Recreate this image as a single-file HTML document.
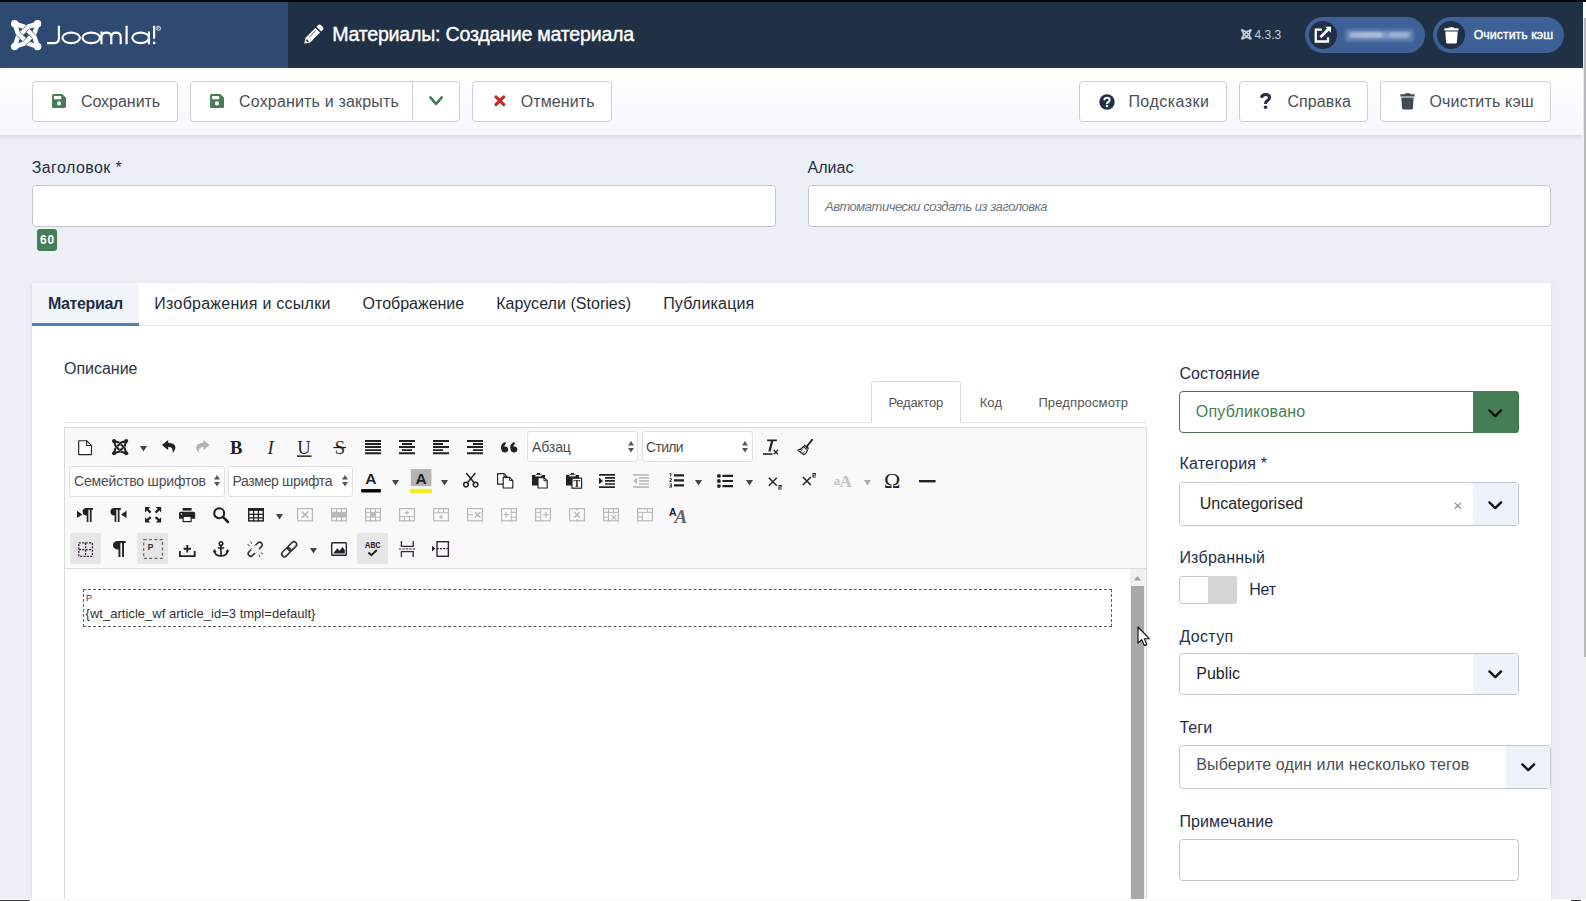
<!DOCTYPE html>
<html lang="ru"><head><meta charset="utf-8"><title>Материалы: Создание материала</title>
<style>
*{box-sizing:border-box;margin:0;padding:0}
html,body{width:1586px;height:901px;overflow:hidden;background:#ecf0f6;font-family:"Liberation Sans",sans-serif;}
#page{position:relative;width:1586px;height:901px;overflow:hidden;background:#ecf0f6}
.a{position:absolute}
.t{position:absolute;white-space:pre;font-family:"Liberation Sans",sans-serif}
.i{position:absolute;overflow:visible}
.hdr{left:0;top:0;width:1583px;height:68px;background:#1f3047}
.logo{left:0;top:0;width:288px;height:68px;background:#2f4a70}
.topbar{left:0;top:0;width:1586px;height:2px;background:#05070b}
.sub{left:0;top:68px;width:1583px;height:67px;background:linear-gradient(to bottom,#fff 0%,#f6f8fc 100%);box-shadow:0 2px 4px rgba(175,188,212,.38)}
.btn{background:#fff;border:1px solid #c9d0da;border-radius:4px;top:81px;height:41px}
.pill{top:17px;height:36px;border-radius:18px;background:#3d6097}
.circ{top:21px;width:28px;height:28px;border-radius:14px;background:#1f3047}
.inp{background:#fff;border:1px solid #c2c8d2;border-radius:4px}
.card{left:32px;top:283px;width:1519px;height:640px;background:#fff;box-shadow:0 1px 3px rgba(160,175,200,.4)}
.sel{background:#fff;border:1px solid #e1e1e1;border-radius:3px}
.hl{background:#e6e6e6;border-radius:2px;width:31px;height:31px}

</style></head>
<body>
<div id="page">
<div class="a hdr"></div>
<div class="a logo"></div>
<div class="a topbar"></div>
<!-- scrollbar strip -->
<div class="a" style="left:1583px;top:2px;width:3px;height:16px;background:#fdfdfd"></div>
<div class="a" style="left:1583px;top:18px;width:3px;height:883px;background:#f0f0f0"></div>
<div class="a" style="left:1584.3px;top:18px;width:1.7px;height:639px;background:#b9b9b9"></div>
<!-- header pills -->
<div class="a pill" style="left:1305px;width:120px"></div>
<div class="a circ" style="left:1309px"></div>
<div class="a" style="left:1345px;top:28.5px;width:69px;height:13px;border-radius:3px;background:rgba(140,168,210,.42);filter:blur(1.6px)"></div>
<div class="a" style="left:1347px;top:31.5px;width:65px;height:6px;border-radius:3px;background:linear-gradient(to right,rgba(220,230,245,0) 0%,rgba(220,230,245,.55) 8%,rgba(225,233,247,.6) 50%,rgba(220,230,245,.2) 60%,rgba(220,230,245,.5) 70%,rgba(220,230,245,.5) 92%,rgba(220,230,245,0) 100%);filter:blur(1.3px)"></div>
<div class="a pill" style="left:1433px;width:131px"></div>
<div class="a circ" style="left:1437px"></div>
<!-- subhead -->
<div class="a sub"></div>
<div class="a btn" style="left:32px;width:146px"></div>
<div class="a btn" style="left:190px;width:270px"></div>
<div class="a" style="left:411.5px;top:82px;width:1px;height:39px;background:#c9d0da"></div>
<div class="a btn" style="left:472px;width:140px"></div>
<div class="a btn" style="left:1079px;width:148px"></div>
<div class="a btn" style="left:1239px;width:129px"></div>
<div class="a btn" style="left:1380px;width:171px"></div>
<!-- title/alias -->
<div class="a inp" style="left:32px;top:185px;width:744px;height:42px"></div>
<div class="a inp" style="left:808px;top:185px;width:743px;height:42px"></div>
<div class="a" style="left:37px;top:229px;width:20px;height:21.5px;background:#457d54;border-radius:3px"></div>
<!-- card -->
<div class="a card"></div>
<div class="a" style="left:32px;top:283px;width:107px;height:43px;background:#f1f5fa"></div>
<div class="a" style="left:32px;top:325px;width:1519px;height:1px;background:#dfe3e8"></div>
<div class="a" style="left:32px;top:322.5px;width:107px;height:3.5px;background:#517eb5"></div>
<!-- editor tabs -->
<div class="a" style="left:64px;top:422px;width:1083px;height:1px;background:#e1e1e1"></div>
<div class="a" style="left:871px;top:381px;width:90px;height:42px;background:#fff;border:1px solid #ddd;border-bottom:1px solid #fff;border-radius:3px 3px 0 0"></div>
<!-- editor -->
<div class="a" style="left:64px;top:427px;width:1083px;height:480px;background:#fff;border:1px solid #dcdcdc"></div>
<div class="a" style="left:65px;top:428px;width:1081px;height:141px;background:#f9f9f9;border-bottom:1px solid #dedede"></div>
<div class="a sel" style="left:527px;top:431px;width:111px;height:31px"></div>
<div class="a sel" style="left:641.5px;top:431px;width:111px;height:31px"></div>
<div class="a sel" style="left:69px;top:465.5px;width:155.5px;height:31px"></div>
<div class="a sel" style="left:227.5px;top:465.5px;width:125px;height:31px"></div>
<div class="a hl" style="left:69.5px;top:533.3px"></div>
<div class="a hl" style="left:137.3px;top:533.3px"></div>
<div class="a hl" style="left:357.3px;top:533.3px"></div>
<!-- content -->
<div class="a" style="left:83px;top:589px;width:1028.5px;height:38px;border:1px dashed #5a5a5a"></div>
<!-- editor scrollbar -->
<div class="a" style="left:1130px;top:569px;width:15.5px;height:332px;background:#f1f1f1"></div>
<div class="a" style="left:1130.8px;top:586px;width:13.2px;height:315px;background:#a9a9a9"></div>
<svg class="i" style="left:1134px;top:576px" width="7" height="4.4" viewBox="0 0 7 4.4"><path d="M0 4.4H7L3.5 0Z" fill="#a3a3a3"/></svg>
<!-- sidebar -->
<div class="a" style="left:1179px;top:391px;width:340px;height:41.5px;background:#fff;border:1px solid #4b7459;border-radius:4px"></div>
<div class="a" style="left:1473px;top:391px;width:46px;height:41.5px;background:#457d54;border-radius:0 4px 4px 0"></div>
<div class="a inp" style="left:1179px;top:482px;width:340px;height:43.5px"></div>
<div class="a" style="left:1473px;top:483px;width:45px;height:41.5px;background:#eef2fa;border-radius:0 3px 3px 0"></div>
<div class="a" style="left:1179px;top:576px;width:58px;height:27.5px;background:#fff;border:1px solid #c8c8c8;border-radius:3px"></div>
<div class="a" style="left:1208px;top:576px;width:29px;height:27.5px;background:#d5d5d5;border-radius:0 3px 3px 0"></div>
<div class="a inp" style="left:1179px;top:653px;width:340px;height:41.5px"></div>
<div class="a" style="left:1473px;top:654px;width:45px;height:39.5px;background:#eef2fa;border-radius:0 3px 3px 0"></div>
<div class="a inp" style="left:1179px;top:745px;width:371.5px;height:43.5px"></div>
<div class="a" style="left:1506px;top:746px;width:43.5px;height:41.5px;background:#eef2fa;border-radius:0 3px 3px 0"></div>
<div class="a inp" style="left:1179px;top:839px;width:340px;height:41.5px"></div>
<!-- mouse cursor -->
<svg class="i" style="left:1137.4px;top:626.4px" width="14" height="21" viewBox="0 0 14 21"><path d="M1 1V17.2L4.7 13.6L7.4 19.6L9.9 18.5L7.3 12.7H12.3Z" fill="#fff" stroke="#111" stroke-width="1.15" stroke-linejoin="round"/></svg>
<!-- bottom artefacts -->
<div class="a" style="left:0;top:899.4px;width:1586px;height:1.6px;background:#fbfbfb"></div>
<div class="a" style="left:0;top:900px;width:30px;height:1px;background:#3a3d42"></div>
<div class="a" style="left:1571px;top:900px;width:10px;height:1px;background:#3a3d42"></div>

<!-- text layer -->
<span class="t" style="left:332.20px;top:24.91px;font-size:19.6px;line-height:19.6px;letter-spacing:-0.224px;color:#fff;-webkit-text-stroke:0.4px #fff;">Материалы: Создание материала</span>
<span class="t" style="left:1254.40px;top:28.94px;font-size:12px;line-height:12px;letter-spacing:0.024px;color:#c5ccd8;">4.3.3</span>
<span class="t" style="left:1473.70px;top:28.79px;font-size:12.3px;line-height:12.3px;letter-spacing:0.072px;color:#fff;-webkit-text-stroke:0.4px #fff;">Очистить кэш</span>
<span class="t" style="left:80.90px;top:93.76px;font-size:16px;line-height:16px;letter-spacing:-0.027px;color:#495057;">Сохранить</span>
<span class="t" style="left:239.00px;top:93.76px;font-size:16px;line-height:16px;letter-spacing:0.176px;color:#495057;">Сохранить и закрыть</span>
<span class="t" style="left:520.80px;top:93.76px;font-size:16px;line-height:16px;letter-spacing:0.099px;color:#495057;">Отменить</span>
<span class="t" style="left:1128.40px;top:93.76px;font-size:16px;line-height:16px;letter-spacing:0.471px;color:#495057;">Подсказки</span>
<span class="t" style="left:1287.40px;top:93.76px;font-size:16px;line-height:16px;letter-spacing:0.106px;color:#495057;">Справка</span>
<span class="t" style="left:1429.40px;top:93.76px;font-size:16px;line-height:16px;letter-spacing:0.174px;color:#495057;">Очистить кэш</span>
<span class="t" style="left:31.70px;top:160.46px;font-size:16px;line-height:16px;letter-spacing:0.419px;color:#1f2f47;">Заголовок *</span>
<span class="t" style="left:807.40px;top:160.46px;font-size:16px;line-height:16px;letter-spacing:0.089px;color:#1f2f47;">Алиас</span>
<span class="t" style="left:825.00px;top:199.50px;font-size:13px;line-height:13px;letter-spacing:-0.464px;color:#6c757d;font-style:italic;">Автоматически создать из заголовка</span>
<span class="t" style="left:40.00px;top:233.74px;font-size:12px;line-height:12px;letter-spacing:0.841px;color:#fff;font-weight:700;">60</span>
<span class="t" style="left:47.90px;top:295.56px;font-size:16px;line-height:16px;letter-spacing:-0.361px;color:#1f2f47;font-weight:700;">Материал</span>
<span class="t" style="left:154.30px;top:295.56px;font-size:16px;line-height:16px;letter-spacing:0.260px;color:#252b33;">Изображения и ссылки</span>
<span class="t" style="left:362.60px;top:295.56px;font-size:16px;line-height:16px;letter-spacing:-0.013px;color:#252b33;">Отображение</span>
<span class="t" style="left:496.20px;top:295.56px;font-size:16px;line-height:16px;letter-spacing:0.041px;color:#252b33;">Карусели (Stories)</span>
<span class="t" style="left:663.20px;top:295.56px;font-size:16px;line-height:16px;letter-spacing:0.186px;color:#252b33;">Публикация</span>
<span class="t" style="left:64.00px;top:360.56px;font-size:16px;line-height:16px;letter-spacing:-0.018px;color:#2b3644;">Описание</span>
<span class="t" style="left:888.40px;top:396.40px;font-size:13px;line-height:13px;letter-spacing:-0.167px;color:#555;">Редактор</span>
<span class="t" style="left:979.70px;top:396.40px;font-size:13px;line-height:13px;letter-spacing:0.095px;color:#555;">Код</span>
<span class="t" style="left:1038.40px;top:396.40px;font-size:13px;line-height:13px;letter-spacing:0.139px;color:#555;">Предпросмотр</span>
<span class="t" style="left:532.10px;top:440.35px;font-size:14px;line-height:14px;letter-spacing:-0.145px;color:#4d4d4d;">Абзац</span>
<span class="t" style="left:646.10px;top:440.35px;font-size:14px;line-height:14px;letter-spacing:-0.736px;color:#4d4d4d;">Стили</span>
<span class="t" style="left:74.00px;top:474.35px;font-size:14px;line-height:14px;letter-spacing:-0.189px;color:#4d4d4d;">Семейство шрифтов</span>
<span class="t" style="left:232.40px;top:474.35px;font-size:14px;line-height:14px;letter-spacing:-0.326px;color:#4d4d4d;">Размер шрифта</span>
<span class="t" style="left:86.00px;top:594.18px;font-size:9px;line-height:9px;letter-spacing:0.000px;color:#444;">P</span>
<span class="t" style="left:85.60px;top:606.60px;font-size:13px;line-height:13px;letter-spacing:0.018px;color:#333;">{wt_article_wf article_id=3 tmpl=default}</span>
<span class="t" style="left:1179.40px;top:365.56px;font-size:16px;line-height:16px;letter-spacing:0.045px;color:#1f2f47;">Состояние</span>
<span class="t" style="left:1195.80px;top:403.86px;font-size:16px;line-height:16px;letter-spacing:0.214px;color:#457d54;">Опубликовано</span>
<span class="t" style="left:1179.40px;top:455.76px;font-size:16px;line-height:16px;letter-spacing:0.223px;color:#1f2f47;">Категория *</span>
<span class="t" style="left:1199.70px;top:495.86px;font-size:16px;line-height:16px;letter-spacing:0.011px;color:#22262a;">Uncategorised</span>
<span class="t" style="left:1179.40px;top:549.86px;font-size:16px;line-height:16px;letter-spacing:0.233px;color:#1f2f47;">Избранный</span>
<span class="t" style="left:1249.20px;top:581.56px;font-size:16px;line-height:16px;letter-spacing:-0.175px;color:#1f2f47;">Нет</span>
<span class="t" style="left:1179.40px;top:628.76px;font-size:16px;line-height:16px;letter-spacing:0.341px;color:#1f2f47;">Доступ</span>
<span class="t" style="left:1196.20px;top:665.86px;font-size:16px;line-height:16px;letter-spacing:0.044px;color:#22262a;">Public</span>
<span class="t" style="left:1179.40px;top:719.86px;font-size:16px;line-height:16px;letter-spacing:0.084px;color:#1f2f47;">Теги</span>
<span class="t" style="left:1196.20px;top:756.96px;font-size:16px;line-height:16px;letter-spacing:0.136px;color:#495057;">Выберите один или несколько тегов</span>
<span class="t" style="left:1179.40px;top:813.86px;font-size:16px;line-height:16px;letter-spacing:0.132px;color:#1f2f47;">Примечание</span>
<!-- icon layer -->
<svg class="i" style="left:10.7px;top:19.8px" width="30.3" height="30.3" viewBox="0 0 30 30" ><path d="M26.31 26.31L23.31 17.02L12.98 6.69L3.69 3.69L6.69 12.98L17.02 23.31Z" fill="none" stroke="#fff" stroke-width="4.5" stroke-linejoin="round"/><path d="M3.69 26.31L12.98 23.31L23.31 12.98L26.31 3.69L17.02 6.69L6.69 17.02Z" fill="none" stroke="#fff" stroke-width="4.5" stroke-linejoin="round"/><circle cx="3.69" cy="3.69" r="3.7" fill="#fff"/><circle cx="3.69" cy="26.31" r="3.7" fill="#fff"/><circle cx="26.31" cy="3.69" r="3.7" fill="#fff"/><circle cx="26.31" cy="26.31" r="3.7" fill="#fff"/><path d="M15.00 5.52L11.82 8.71M18.18 8.71L15.00 11.89M24.48 15.00L21.29 11.82M21.29 18.18L18.11 15.00M15.00 24.48L18.18 21.29M11.82 21.29L15.00 18.11M5.52 15.00L8.71 18.18M8.71 11.82L11.89 15.00" stroke="#2f4a70" stroke-width="0.75" fill="none"/></svg>
<svg class="i" style="left:44px;top:22px" width="122" height="26" viewBox="0 0 122 26" ><path fill="none" stroke="#fff" stroke-width="2.15" d="M3 21.1H10.2Q14.9 21.1 14.9 16.2V3.8 M27.15 10.6A8.75 5.25 0 1 0 27.15 21.1A8.75 5.25 0 1 0 27.15 10.6Z M47.2 10.6A8.75 5.25 0 1 0 47.2 21.1A8.75 5.25 0 1 0 47.2 10.6Z M57.5 9.6V22.2M57.5 15.4Q57.5 10.6 62.4 10.6Q67.3 10.6 67.3 15.4V22.2M67.3 15.4Q67.3 10.6 72 10.6Q76.7 10.6 76.7 15.4V22.2 M82.6 3.8V22.2 M104.9 9.6V22.2M104.9 15.85A8.3 5.25 0 1 0 88.3 15.85A8.3 5.25 0 1 0 104.9 15.85Z M110.1 3.8V16.8"/><circle cx="110.1" cy="20.9" r="1.35" fill="#fff"/><circle cx="114.4" cy="6.3" r="2.2" fill="none" stroke="#fff" stroke-width="0.75"/><path d="M113.7 7.5V5.1H114.6Q115.3 5.1 115.3 5.7T114.6 6.3H113.7M114.5 6.3L115.3 7.5" fill="none" stroke="#fff" stroke-width="0.5"/></svg>
<svg class="i" style="left:303.6px;top:23.9px" width="20" height="20" viewBox="0 0 20 20" ><g fill="#fff"><path d="M14.2 1.1A1.9 1.9 0 0 1 16.9 1.1L18.9 3.1A1.9 1.9 0 0 1 18.9 5.8L17.2 7.5L12.5 2.8Z"/><path d="M11.4 3.9L16.1 8.6L6.2 18.5L0.9 19.6Q0.2 19.8 0.4 19.1L1.5 13.8Z"/></g><path d="M2.5 14.9L5.1 17.5L3.2 17.9L2.1 16.8Z" fill="#1f3047"/><path d="M5.9 12.5L11.2 7.2" stroke="#1f3047" stroke-width="0.8" stroke-linecap="round"/></svg>
<svg class="i" style="left:1240.6px;top:29.4px" width="10.8" height="10.8" viewBox="0 0 30 30" ><path d="M26.31 26.31L23.31 17.02L12.98 6.69L3.69 3.69L6.69 12.98L17.02 23.31Z" fill="none" stroke="#c5ccd8" stroke-width="4.5" stroke-linejoin="round"/><path d="M3.69 26.31L12.98 23.31L23.31 12.98L26.31 3.69L17.02 6.69L6.69 17.02Z" fill="none" stroke="#c5ccd8" stroke-width="4.5" stroke-linejoin="round"/><circle cx="3.69" cy="3.69" r="3.7" fill="#c5ccd8"/><circle cx="3.69" cy="26.31" r="3.7" fill="#c5ccd8"/><circle cx="26.31" cy="3.69" r="3.7" fill="#c5ccd8"/><circle cx="26.31" cy="26.31" r="3.7" fill="#c5ccd8"/></svg>
<svg class="i" style="left:1314.4px;top:27.2px" width="17" height="16" viewBox="0 0 17 16" ><path fill="none" stroke="#fff" stroke-width="2.3" stroke-linejoin="miter" d="M7.8 2.7H1.75V14.5H14.05V10.2"/><path d="M6.4 10.2L14.6 2" stroke="#fff" stroke-width="2.7"/><path fill="#fff" d="M11 -0.2H17V5.8Z"/></svg>
<svg class="i" style="left:1444.3px;top:26.6px" width="15" height="16.5" viewBox="0 0 15 16.5" ><path fill="#fff" d="M0.4 1.2H4.6L5.2 0.2H9.8L10.4 1.2H14.6V3.4H0.4Z"/><path fill="#fff" d="M1.3 4.4H13.7L12.9 15.4A1.3 1.3 0 0 1 11.6 16.5H3.4A1.3 1.3 0 0 1 2.1 15.4Z"/></svg>
<svg class="i" style="left:51.9px;top:94.4px" width="14" height="14" viewBox="0 0 14 14" ><path fill="#457d54" fill-rule="evenodd" d="M1.5 0H10.2L14 3.8V12.5A1.5 1.5 0 0 1 12.5 14H1.5A1.5 1.5 0 0 1 0 12.5V1.5A1.5 1.5 0 0 1 1.5 0ZM2 2V5.2H9.2V2ZM7 7.3A2.1 2.1 0 1 0 7 11.5A2.1 2.1 0 1 0 7 7.3Z"/></svg>
<svg class="i" style="left:209.9px;top:94.4px" width="14" height="14" viewBox="0 0 14 14" ><path fill="#457d54" fill-rule="evenodd" d="M1.5 0H10.2L14 3.8V12.5A1.5 1.5 0 0 1 12.5 14H1.5A1.5 1.5 0 0 1 0 12.5V1.5A1.5 1.5 0 0 1 1.5 0ZM2 2V5.2H9.2V2ZM7 7.3A2.1 2.1 0 1 0 7 11.5A2.1 2.1 0 1 0 7 7.3Z"/></svg>
<svg class="i" style="left:429.4px;top:96.4px" width="14.2" height="9.4" viewBox="0 0 14.2 9.4" ><path fill="none" stroke="#3b7a50" stroke-width="2.5" stroke-linecap="round" stroke-linejoin="round" d="M1.4 1.4L7.1 8.0L12.799999999999999 1.4"/></svg>
<svg class="i" style="left:493.5px;top:95.4px" width="11.6" height="11.6" viewBox="0 0 11.6 11.6" ><path stroke="#c52827" stroke-width="3.1" stroke-linecap="round" d="M1.9 1.9L9.7 9.7M9.7 1.9L1.9 9.7"/></svg>
<svg class="i" style="left:1098.8px;top:93.5px" width="16" height="16" viewBox="0 0 16 16" ><circle cx="8" cy="8" r="7.7" fill="#1f2f47"/><path fill="none" stroke="#fff" stroke-width="2.1" d="M5.4 6.3Q5.5 3.8 8 3.8Q10.6 3.8 10.6 5.9Q10.6 7.3 9.2 8Q8 8.6 8 9.9"/><circle cx="8" cy="12.1" r="1.25" fill="#fff"/></svg>
<svg class="i" style="left:1260px;top:93px" width="11" height="16" viewBox="0 0 11 16" ><path fill="none" stroke="#1f2f47" stroke-width="3" d="M1.6 4.8Q1.9 1.5 5.6 1.5Q9.5 1.5 9.5 4.6Q9.5 6.6 7.4 7.7Q5.5 8.7 5.5 10.9"/><circle cx="5.5" cy="14.2" r="1.75" fill="#1f2f47"/></svg>
<svg class="i" style="left:1399.9px;top:93px" width="15" height="16.5" viewBox="0 0 15 16.5" ><path fill="#434a57" d="M0.4 1.2H4.6L5.2 0.2H9.8L10.4 1.2H14.6V3.4H0.4Z"/><path fill="#434a57" d="M1.3 4.4H13.7L12.9 15.4A1.3 1.3 0 0 1 11.6 16.5H3.4A1.3 1.3 0 0 1 2.1 15.4Z"/></svg>
<svg class="i" style="left:1488.4px;top:408.7px" width="14.5" height="8.5" viewBox="0 0 14.5 8.5" ><path fill="none" stroke="#111" stroke-width="2.4" stroke-linecap="round" stroke-linejoin="round" d="M1.4 1.4L7.25 7.1L13.1 1.4"/></svg>
<svg class="i" style="left:1488.4px;top:500.5px" width="14.5" height="8.5" viewBox="0 0 14.5 8.5" ><path fill="none" stroke="#111" stroke-width="2.4" stroke-linecap="round" stroke-linejoin="round" d="M1.4 1.4L7.25 7.1L13.1 1.4"/></svg>
<svg class="i" style="left:1488.2px;top:670.3px" width="14.5" height="8.5" viewBox="0 0 14.5 8.5" ><path fill="none" stroke="#111" stroke-width="2.4" stroke-linecap="round" stroke-linejoin="round" d="M1.4 1.4L7.25 7.1L13.1 1.4"/></svg>
<svg class="i" style="left:1520.8px;top:763.2px" width="14.5" height="8.5" viewBox="0 0 14.5 8.5" ><path fill="none" stroke="#111" stroke-width="2.4" stroke-linecap="round" stroke-linejoin="round" d="M1.4 1.4L7.25 7.1L13.1 1.4"/></svg>
<svg class="i" style="left:1454px;top:502px" width="7.6" height="7.6" viewBox="0 0 7.6 7.6" ><path stroke="#999" stroke-width="1.3" d="M0.8 0.8L6.8 6.8M6.8 0.8L0.8 6.8"/></svg>
<svg class="i" style="left:78px;top:439.6px" width="14.2" height="15.4" viewBox="0 0 14.2 15.4" ><path d="M0.7 0.7H8.6L13.5 5.6V14.7H0.7Z" fill="#fff" stroke="#2a2030" stroke-width="1.15" stroke-linejoin="round"/><path d="M8.6 0.7V5.6H13.5" fill="none" stroke="#2a2030" stroke-width="1.05" stroke-linejoin="round"/></svg>
<svg class="i" style="left:111.5px;top:438.9px" width="16.2" height="16.2" viewBox="0 0 30 30" ><path d="M26.31 26.31L23.41 16.91L13.09 6.59L3.69 3.69L6.59 13.09L16.91 23.41Z" fill="none" stroke="#222" stroke-width="3.9" stroke-linejoin="round"/><path d="M3.69 26.31L13.09 23.41L23.41 13.09L26.31 3.69L16.91 6.59L6.59 16.91Z" fill="none" stroke="#222" stroke-width="3.9" stroke-linejoin="round"/><circle cx="3.69" cy="3.69" r="3.7" fill="#222"/><circle cx="3.69" cy="26.31" r="3.7" fill="#222"/><circle cx="26.31" cy="3.69" r="3.7" fill="#222"/><circle cx="26.31" cy="26.31" r="3.7" fill="#222"/><path d="M15.00 5.74L12.24 8.49M17.76 8.49L15.00 11.25M24.26 15.00L21.51 12.24M21.51 17.76L18.75 15.00M15.00 24.26L17.76 21.51M12.24 21.51L15.00 18.75M5.74 15.00L8.49 17.76M8.49 12.24L11.25 15.00" stroke="#f9f9f9" stroke-width="0.75" fill="none"/></svg>
<svg class="i" style="left:139.7px;top:446.0px" width="7" height="5.4" viewBox="0 0 7 5.4" ><path fill="#444" d="M0 0H7L3.5 5.4Z"/></svg>
<svg class="i" style="left:162.3px;top:440.2px" width="13.6" height="13.2" viewBox="0 0 13.6 13.2" ><path d="M6.2 0L0 5.1L6.2 10.2V7.1C9.6 7.1 11 8.6 10.6 13C12.4 11.2 13.4 9.4 13.4 7.6C13.4 4.6 10.8 3.1 6.2 3.1Z" fill="#222"/></svg>
<svg class="i" style="left:196.2px;top:440.4px" width="13.6" height="13.2" viewBox="0 0 13.6 13.2" ><g transform="translate(13.6 0) scale(-1 1)"><path d="M6.2 0L0 5.1L6.2 10.2V7.1C9.6 7.1 11 8.6 10.6 13C12.4 11.2 13.4 9.4 13.4 7.6C13.4 4.6 10.8 3.1 6.2 3.1Z" fill="#b4b4b4"/></g></svg>
<svg class="i" style="left:230.4px;top:438px" width="16" height="16" viewBox="0 0 16 16" ><text x="0" y="15.7" style="font-family:&quot;Liberation Serif&quot;;font-size:18.6px;font-weight:700;" fill="#222">B</text></svg>
<svg class="i" style="left:266.4px;top:438px" width="14" height="16" viewBox="0 0 14 16" ><text x="1.4" y="15.7" style="font-family:&quot;Liberation Serif&quot;;font-size:18.6px;font-weight:400;font-style:italic;" fill="#222">I</text></svg>
<svg class="i" style="left:297.4px;top:438px" width="16" height="19" viewBox="0 0 16 19" ><text x="0.3" y="15.7" style="font-family:&quot;Liberation Serif&quot;;font-size:18.6px;font-weight:400;" fill="#222">U</text><rect x="0" y="17.4" width="14.6" height="1.5" fill="#222"/></svg>
<svg class="i" style="left:332.6px;top:438px" width="14" height="16" viewBox="0 0 14 16" ><text x="1.8" y="15.7" style="font-family:&quot;Liberation Serif&quot;;font-size:18.6px;font-weight:400;" fill="#222">S</text><rect x="0.4" y="8.9" width="12.6" height="1.2" fill="#222"/></svg>
<svg class="i" style="left:365px;top:440.1px" width="16" height="14" viewBox="0 0 16 14" ><path fill="#222" d="M0 0H16V1.95H0ZM0 3.05H16V5.0H0ZM0 6.1H16V8.049999999999999H0ZM0 9.15H16V11.1H0ZM0 12.2H16V14.149999999999999H0Z"/></svg>
<svg class="i" style="left:399px;top:440.1px" width="16" height="14" viewBox="0 0 16 14" ><path fill="#222" d="M0 0H16V1.95H0ZM3 3.05H13V5.0H3ZM0 6.1H16V8.049999999999999H0ZM3 9.15H13V11.1H3ZM0 12.2H16V14.149999999999999H0Z"/></svg>
<svg class="i" style="left:433px;top:440.1px" width="16" height="14" viewBox="0 0 16 14" ><path fill="#222" d="M0 0H16V1.95H0ZM0 3.05H10V5.0H0ZM0 6.1H16V8.049999999999999H0ZM0 9.15H10V11.1H0ZM0 12.2H16V14.149999999999999H0Z"/></svg>
<svg class="i" style="left:467px;top:440.1px" width="16" height="14" viewBox="0 0 16 14" ><path fill="#222" d="M0 0H16V1.95H0ZM6 3.05H16V5.0H6ZM0 6.1H16V8.049999999999999H0ZM6 9.15H16V11.1H6ZM0 12.2H16V14.149999999999999H0Z"/></svg>
<svg class="i" style="left:500.8px;top:442.3px" width="16.6" height="10.8" viewBox="0 0 16.6 10.8" ><path d="M3.6 0C1.4 1 0 2.9 0 5.6C0 8.7 1.4 10.6 3.9 10.6C5.8 10.6 7.2 9.3 7.2 7.5C7.2 5.8 6 4.6 4.4 4.6C3.9 4.6 3.5 4.7 3.2 4.8C3.3 3.3 4.2 2.1 5.2 1.4Z" fill="#222"/><path transform="translate(9.2 0)" d="M3.6 0C1.4 1 0 2.9 0 5.6C0 8.7 1.4 10.6 3.9 10.6C5.8 10.6 7.2 9.3 7.2 7.5C7.2 5.8 6 4.6 4.4 4.6C3.9 4.6 3.5 4.7 3.2 4.8C3.3 3.3 4.2 2.1 5.2 1.4Z" fill="#222"/></svg>
<svg class="i" style="left:627.9px;top:440.9px" width="6" height="12" viewBox="0 0 6 12" ><path fill="#555" d="M3 0L6 4.6H0ZM0 7H6L3 11.6Z"/></svg>
<svg class="i" style="left:742px;top:440.9px" width="6" height="12" viewBox="0 0 6 12" ><path fill="#555" d="M3 0L6 4.6H0ZM0 7H6L3 11.6Z"/></svg>
<svg class="i" style="left:763px;top:438.6px" width="16" height="16.4" viewBox="0 0 16 16.4" ><path d="M4.2 0.4H13.8V2.3H10.2L7.6 12.6H5.3L7.9 2.3H4.2Z" fill="#222"/><rect x="0" y="14.2" width="9.4" height="1.6" fill="#222"/><path d="M10.8 11L15 15.2M15 11L10.8 15.2" stroke="#222" stroke-width="1.3"/></svg>
<svg class="i" style="left:797px;top:438.6px" width="16.4" height="16.4" viewBox="0 0 16.4 16.4" ><path d="M15.3 0.6L9.9 7.4" stroke="#222" stroke-width="1.7" stroke-linecap="round"/><path d="M7.6 5.4L12.2 9.1L11.2 10.3L6.6 6.6Z" fill="#222"/><path d="M6.2 7.6L10.4 10.9C10 13.2 8.6 15 6.6 15.6L1 11.2C3.6 10.8 5.2 9.6 6.2 7.6Z" fill="none" stroke="#222" stroke-width="1.2" stroke-linejoin="round"/><path d="M3.4 12.6L5.6 10.6M5.4 14.2L7.8 11.8" stroke="#222" stroke-width="0.8"/></svg>
<svg class="i" style="left:214.3px;top:475.2px" width="6" height="12" viewBox="0 0 6 12" ><path fill="#555" d="M3 0L6 4.6H0ZM0 7H6L3 11.6Z"/></svg>
<svg class="i" style="left:342px;top:475.2px" width="6" height="12" viewBox="0 0 6 12" ><path fill="#555" d="M3 0L6 4.6H0ZM0 7H6L3 11.6Z"/></svg>
<svg class="i" style="left:361.2px;top:471px" width="20" height="22" viewBox="0 0 20 22" ><text x="4.3" y="12.6" style="font-family:&quot;Liberation Sans&quot;;font-size:15.5px;font-weight:700" fill="#222">A</text><rect x="0.2" y="18.1" width="19.6" height="3.4" fill="#000"/></svg>
<svg class="i" style="left:391.5px;top:479.9px" width="7" height="5.4" viewBox="0 0 7 5.4" ><path fill="#444" d="M0 0H7L3.5 5.4Z"/></svg>
<svg class="i" style="left:409.8px;top:468.9px" width="22" height="24.2" viewBox="0 0 22 24.2" ><rect x="0.8" y="0.1" width="20.6" height="17.1" fill="#b4b4b4"/><text x="5.4" y="14.7" style="font-family:&quot;Liberation Sans&quot;;font-size:15.5px;font-weight:700" fill="#222">A</text><rect x="0" y="19.8" width="22" height="4.3" fill="#f6ec22"/></svg>
<svg class="i" style="left:441.3px;top:479.9px" width="7" height="5.4" viewBox="0 0 7 5.4" ><path fill="#444" d="M0 0H7L3.5 5.4Z"/></svg>
<svg class="i" style="left:462.8px;top:473.2px" width="15.6" height="14.8" viewBox="0 0 15.6 14.8" ><g fill="none" stroke="#222" stroke-width="1.5"><circle cx="3" cy="11.6" r="2.3"/><circle cx="12.6" cy="11.6" r="2.3"/><path d="M4.4 9.8L12 0.6M11.2 9.8L3.6 0.6" stroke-linecap="round"/></g></svg>
<svg class="i" style="left:496.6px;top:473.2px" width="16.6" height="15.8" viewBox="0 0 16.6 15.8" ><path d="M0.6 0.6H6.999999999999999L10.2 3.8000000000000003V11.2H0.6Z" fill="#fff" stroke="#2a2030" stroke-width="1.2" stroke-linejoin="round"/><path d="M6.999999999999999 0.6V3.8000000000000003H10.2" fill="none" stroke="#2a2030" stroke-width="1"/><path d="M6.2 4.4H12.600000000000001L15.8 7.6000000000000005V15.0H6.2Z" fill="#fff" stroke="#2a2030" stroke-width="1.2" stroke-linejoin="round"/><path d="M12.600000000000001 4.4V7.6000000000000005H15.8" fill="none" stroke="#2a2030" stroke-width="1"/></svg>
<svg class="i" style="left:531.5px;top:473.2px" width="16" height="15.8" viewBox="0 0 16 15.8" ><path d="M0 2H3.6V1.2H5V0H8V1.2H9.4V2H13V12.6H0Z" fill="#222"/><rect x="3.4" y="1.8" width="6.2" height="1.6" fill="#f9f9f9"/><path d="M6 4.6H12.0L15.2 7.8V15.0H6Z" fill="#fff" stroke="#2a2030" stroke-width="1.2" stroke-linejoin="round"/><path d="M12.0 4.6V7.8H15.2" fill="none" stroke="#2a2030" stroke-width="1"/></svg>
<svg class="i" style="left:565.6px;top:473.2px" width="16" height="15.8" viewBox="0 0 16 15.8" ><path d="M0 2H3.6V1.2H5V0H8V1.2H9.4V2H13V12.6H0Z" fill="#222"/><rect x="3.4" y="1.8" width="6.2" height="1.6" fill="#f9f9f9"/><rect x="6" y="5.2" width="9.6" height="10" fill="#fff" stroke="#2a2030" stroke-width="1.2"/><text x="7.6" y="14" style="font-family:&quot;Liberation Serif&quot;;font-size:10px;font-weight:700" fill="#222">T</text></svg>
<svg class="i" style="left:599px;top:473.9px" width="16" height="14" viewBox="0 0 16 14" ><path fill="#222" d="M0 0H16V1.7H0ZM6 3.05H16V4.75H6ZM6 6.1H16V7.8H6ZM6 9.15H16V10.85H6ZM0 12.2H16V13.899999999999999H0ZM0 3.6L4 6.95L0 10.3Z"/></svg>
<svg class="i" style="left:632.8px;top:473.9px" width="16" height="14" viewBox="0 0 16 14" ><path fill="#bdbdbd" d="M0 0H16V1.7H0ZM6 3.05H16V4.75H6ZM6 6.1H16V7.8H6ZM6 9.15H16V10.85H6ZM0 12.2H16V13.899999999999999H0ZM4 3.6L0 6.95L4 10.3Z"/></svg>
<svg class="i" style="left:668.6px;top:473.4px" width="15.2" height="15.2" viewBox="0 0 15.2 15.2" ><path fill="#222" d="M5 1.2H15V3.4000000000000004H5ZM5 6.2H15V8.4H5ZM5 11.2H15V13.399999999999999H5Z"/><g fill="#222"><path d="M1 0H2.3V3.6H1.3V1H0.6Z"/><path d="M0.3 5.2H2.8V6.8L1.4 8.2H2.8V9H0.3V8.2L1.8 6.6V6H0.3Z"/><path d="M0.3 10.4H2.8V14.4H0.3V13.6H1.9V12.8H0.9V12H1.9V11.2H0.3Z"/></g></svg>
<svg class="i" style="left:695.3px;top:479.9px" width="7" height="5.4" viewBox="0 0 7 5.4" ><path fill="#444" d="M0 0H7L3.5 5.4Z"/></svg>
<svg class="i" style="left:717.2px;top:474.2px" width="16.2" height="14" viewBox="0 0 16.2 14" ><path fill="#222" d="M5.4 0.8H16V3.0H5.4ZM5.4 5.9H16V8.100000000000001H5.4ZM5.4 11.0H16V13.2H5.4Z"/><g fill="#222"><circle cx="1.9" cy="1.9" r="1.9"/><circle cx="1.9" cy="7" r="1.9"/><circle cx="1.9" cy="12.1" r="1.9"/></g></svg>
<svg class="i" style="left:745.5px;top:479.9px" width="7" height="5.4" viewBox="0 0 7 5.4" ><path fill="#444" d="M0 0H7L3.5 5.4Z"/></svg>
<svg class="i" style="left:767.6px;top:476.6px" width="14" height="13" viewBox="0 0 14 13" ><path d="M0.8 0.8L8.8 8.8M8.8 0.8L0.8 8.8" stroke="#222" stroke-width="1.5"/><path transform="translate(10.4 8)" d="M0 0H3.4V2.4H1V3.6H3.4V4.5H0V1.6H2.4V0.9H0Z" fill="#222"/></svg>
<svg class="i" style="left:801.5px;top:473px" width="14" height="13" viewBox="0 0 14 13" ><g transform="translate(0 3.2)"><path d="M0.8 0.8L8.8 8.8M8.8 0.8L0.8 8.8" stroke="#222" stroke-width="1.5"/></g><path transform="translate(10.4 0)" d="M0 0H3.4V2.4H1V3.6H3.4V4.5H0V1.6H2.4V0.9H0Z" fill="#222"/></svg>
<svg class="i" style="left:833.6px;top:473px" width="19" height="15" viewBox="0 0 19 15" ><text x="0" y="12" style="font-family:&quot;Liberation Serif&quot;;font-size:12px;font-weight:700" fill="#c2c2c2">a</text><text x="5.4" y="14.2" style="font-family:&quot;Liberation Serif&quot;;font-size:17px;font-weight:700" fill="#c2c2c2">A</text></svg>
<svg class="i" style="left:863.5px;top:479.9px" width="7" height="5.4" viewBox="0 0 7 5.4" ><path fill="#aaa" d="M0 0H7L3.5 5.4Z"/></svg>
<svg class="i" style="left:884px;top:470px" width="19" height="19" viewBox="0 0 19 19" ><text x="0.1" y="18.4" style="font-family:&quot;Liberation Serif&quot;;font-size:22px;font-weight:400;" fill="#222">Ω</text></svg>
<svg class="i" style="left:918.6px;top:479.6px" width="16.6" height="2.6" viewBox="0 0 16.6 2.6" ><rect width="16.6" height="2.4" fill="#222"/></svg>
<svg class="i" style="left:76.5px;top:507.8px" width="16.6" height="14" viewBox="0 0 16.6 14" ><g transform="translate(3.4 0)"><path d="M5.6 0H12.6V1.8H11.2V14H9.5V1.8H8V14H6.3V7.4C3.6 7.4 2.1 5.9 2.1 3.7C2.1 1.5 3.6 0 5.6 0Z" fill="#222"/></g><path d="M0 2.8L5.4 6.4L0 10Z" fill="#222"/></svg>
<svg class="i" style="left:110.4px;top:507.8px" width="16.6" height="14" viewBox="0 0 16.6 14" ><g transform="translate(-1.7 0)"><path d="M5.6 0H12.6V1.8H11.2V14H9.5V1.8H8V14H6.3V7.4C3.6 7.4 2.1 5.9 2.1 3.7C2.1 1.5 3.6 0 5.6 0Z" fill="#222"/></g><path d="M16.5 2.8L11.1 6.4L16.5 10Z" fill="#222"/></svg>
<svg class="i" style="left:145.2px;top:507.3px" width="16.2" height="15.6" viewBox="0 0 16.2 15.6" ><g fill="#222"><path d="M0 0H5.4L3.5 1.9L6.4 4.8L4.8 6.4L1.9 3.5L0 5.4Z"/><path transform="translate(16.2 0) scale(-1 1)" d="M0 0H5.4L3.5 1.9L6.4 4.8L4.8 6.4L1.9 3.5L0 5.4Z"/><path transform="translate(0 15.6) scale(1 -1)" d="M0 0H5.4L3.5 1.9L6.4 4.8L4.8 6.4L1.9 3.5L0 5.4Z"/><path transform="translate(16.2 15.6) scale(-1 -1)" d="M0 0H5.4L3.5 1.9L6.4 4.8L4.8 6.4L1.9 3.5L0 5.4Z"/></g></svg>
<svg class="i" style="left:179px;top:507.8px" width="16.2" height="14.2" viewBox="0 0 16.2 14.2" ><rect x="3.6" y="0" width="9" height="2.6" fill="#222"/><path d="M1.6 3.8H14.6A1.6 1.6 0 0 1 16.2 5.4V10.8H0V5.4A1.6 1.6 0 0 1 1.6 3.8Z" fill="#222"/><rect x="4.1" y="8.4" width="8" height="5.2" fill="#fff" stroke="#222" stroke-width="1.2"/><circle cx="2.4" cy="6" r="0.8" fill="#f9f9f9"/></svg>
<svg class="i" style="left:213.2px;top:507.3px" width="16.2" height="15.8" viewBox="0 0 16.2 15.8" ><circle cx="6.2" cy="6.2" r="5" fill="none" stroke="#222" stroke-width="2.1"/><path d="M9.9 9.9L15 15" stroke="#222" stroke-width="2.6" stroke-linecap="round"/></svg>
<svg class="i" style="left:247.6px;top:508.1px" width="16" height="13.6" viewBox="0 0 16 13.6" ><rect x="0.7" y="0.7" width="14.6" height="12.2" fill="none" stroke="#222" stroke-width="1.4"/><rect x="0.7" y="0.7" width="14.6" height="2.2" fill="#222"/><path d="M5.6 0V13.6M10.4 0V13.6M0 6.3H16M0 9.8H16" stroke="#222" stroke-width="1.3"/></svg>
<svg class="i" style="left:275.7px;top:514.0px" width="7" height="5.4" viewBox="0 0 7 5.4" ><path fill="#444" d="M0 0H7L3.5 5.4Z"/></svg>
<svg class="i" style="left:296.8px;top:508.3px" width="16" height="13.4" viewBox="0 0 16 13.4" ><rect x="0.6" y="0.6" width="14.8" height="12.200000000000001" fill="none" stroke="#b9b9b9" stroke-width="1.2"/><path d="M4.8 3.5L11.2 9.9M11.2 3.5L4.8 9.9" stroke="#b9b9b9" stroke-width="1.6" fill="none"/></svg>
<svg class="i" style="left:330.83000000000004px;top:508.3px" width="16" height="13.4" viewBox="0 0 16 13.4" ><rect x="0.6" y="0.6" width="14.8" height="12.200000000000001" fill="none" stroke="#b9b9b9" stroke-width="1.2"/><path d="M5.5 0V13.4M10.5 0V13.4M0 4.4H16M0 9H16" stroke="#b9b9b9" stroke-width="1.0" fill="none"/><rect x="0.6" y="4.4" width="14.8" height="4.6" fill="#b9b9b9"/></svg>
<svg class="i" style="left:364.86px;top:508.3px" width="16" height="13.4" viewBox="0 0 16 13.4" ><rect x="0.6" y="0.6" width="14.8" height="12.200000000000001" fill="none" stroke="#b9b9b9" stroke-width="1.2"/><path d="M5.5 0V13.4M10.5 0V13.4M0 4.4H16M0 9H16" stroke="#b9b9b9" stroke-width="1.0" fill="none"/><rect x="5.5" y="4.4" width="5" height="4.6" fill="#b9b9b9"/></svg>
<svg class="i" style="left:398.89px;top:508.3px" width="16" height="13.4" viewBox="0 0 16 13.4" ><rect x="0.6" y="0.6" width="14.8" height="12.200000000000001" fill="none" stroke="#b9b9b9" stroke-width="1.2"/><path d="M0 8.6H16M5.5 8.6V13.4M10.5 8.6V13.4" stroke="#b9b9b9" stroke-width="1.0" fill="none"/><path d="M6 4.6H10M8 2.5999999999999996V6.6" stroke="#b9b9b9" stroke-width="1.1" fill="none"/></svg>
<svg class="i" style="left:432.92px;top:508.3px" width="16" height="13.4" viewBox="0 0 16 13.4" ><rect x="0.6" y="0.6" width="14.8" height="12.200000000000001" fill="none" stroke="#b9b9b9" stroke-width="1.2"/><path d="M0 4.8H16M5.5 0V4.8M10.5 0V4.8" stroke="#b9b9b9" stroke-width="1.0" fill="none"/><path d="M6 9H10M8 7V11" stroke="#b9b9b9" stroke-width="1.1" fill="none"/></svg>
<svg class="i" style="left:466.95000000000005px;top:508.3px" width="16" height="13.4" viewBox="0 0 16 13.4" ><rect x="0.6" y="0.6" width="14.8" height="12.200000000000001" fill="none" stroke="#b9b9b9" stroke-width="1.2"/><path d="M0 6.7H6" stroke="#b9b9b9" stroke-width="1.0" fill="none"/><path d="M7.8999999999999995 4.0L13.3 9.4M13.3 4.0L7.8999999999999995 9.4" stroke="#b9b9b9" stroke-width="1.4" fill="none"/></svg>
<svg class="i" style="left:500.98px;top:508.3px" width="16" height="13.4" viewBox="0 0 16 13.4" ><rect x="0.6" y="0.6" width="14.8" height="12.200000000000001" fill="none" stroke="#b9b9b9" stroke-width="1.2"/><path d="M10.2 0V13.4M10.2 4.4H16M10.2 9H16" stroke="#b9b9b9" stroke-width="1.0" fill="none"/><path d="M2.6 6.7H7.800000000000001M5.2 4.1V9.3" stroke="#b9b9b9" stroke-width="1.3" fill="none"/></svg>
<svg class="i" style="left:535.01px;top:508.3px" width="16" height="13.4" viewBox="0 0 16 13.4" ><rect x="0.6" y="0.6" width="14.8" height="12.200000000000001" fill="none" stroke="#b9b9b9" stroke-width="1.2"/><path d="M5.8 0V13.4M0 4.4H5.8M0 9H5.8" stroke="#b9b9b9" stroke-width="1.0" fill="none"/><path d="M8.200000000000001 6.7H13.4M10.8 4.1V9.3" stroke="#b9b9b9" stroke-width="1.3" fill="none"/></svg>
<svg class="i" style="left:569.04px;top:508.3px" width="16" height="13.4" viewBox="0 0 16 13.4" ><rect x="0.6" y="0.6" width="14.8" height="12.200000000000001" fill="none" stroke="#b9b9b9" stroke-width="1.2"/><path d="M8 0V2.5M8 11V13.4" stroke="#b9b9b9" stroke-width="1.0" fill="none"/><path d="M5.3 4.0L10.7 9.4M10.7 4.0L5.3 9.4" stroke="#b9b9b9" stroke-width="1.4" fill="none"/></svg>
<svg class="i" style="left:603.0699999999999px;top:508.3px" width="16" height="13.4" viewBox="0 0 16 13.4" ><rect x="0.6" y="0.6" width="14.8" height="12.200000000000001" fill="none" stroke="#b9b9b9" stroke-width="1.2"/><path d="M5.5 0V13.4M10.5 0V6M0 4.4H16M0 9H5.5" stroke="#b9b9b9" stroke-width="1.0" fill="none"/><path d="M8.8 7.2L13.2 11.600000000000001M13.2 7.2L8.8 11.600000000000001" stroke="#b9b9b9" stroke-width="1.2" fill="none"/></svg>
<svg class="i" style="left:637.1px;top:508.3px" width="16" height="13.4" viewBox="0 0 16 13.4" ><rect x="0.6" y="0.6" width="14.8" height="12.200000000000001" fill="none" stroke="#b9b9b9" stroke-width="1.2"/><path d="M0 4.4H16M5.5 4.4V13.4M0 9H5.5M10.5 0V4.4" stroke="#b9b9b9" stroke-width="1.0" fill="none"/></svg>
<svg class="i" style="left:668.6px;top:506.6px" width="20" height="16.4" viewBox="0 0 20 16.4" ><text x="0" y="8.6" style="font-family:&quot;Liberation Sans&quot;;font-size:10.5px;font-weight:700" fill="#222">A</text><text x="5.6" y="16" style="font-family:&quot;Liberation Serif&quot;;font-size:19px;font-weight:700;font-style:italic" fill="#666">A</text></svg>
<svg class="i" style="left:78px;top:541.8px" width="15.2" height="15.2" viewBox="0 0 15.2 15.2" ><path d="M0.8 0.8H14.4V14.4H0.8ZM7.6 0.8V14.4M0.8 7.6H14.4" fill="none" stroke="#3a2340" stroke-width="1.3" stroke-dasharray="2.1 1.3"/></svg>
<svg class="i" style="left:112.6px;top:541px" width="12.6" height="16" viewBox="0 0 12.6 16" ><path d="M4.6 0H12.6V1.9H11V16H9.1V1.9H7.4V16H5.5V8.6C2.2 8.6 0 6.9 0 4.3C0 1.7 2 0 4.6 0Z" fill="#222"/></svg>
<svg class="i" style="left:143px;top:539px" width="20.2" height="20" viewBox="0 0 20.2 20" ><rect x="0.7" y="0.7" width="18.8" height="18.6" fill="none" stroke="#666" stroke-width="1.2" stroke-dasharray="3 2.3"/><text x="4.8" y="11.2" style="font-family:&quot;Liberation Sans&quot;;font-size:8.6px;font-weight:700" fill="#333">P</text></svg>
<svg class="i" style="left:178.8px;top:545px" width="16.6" height="12" viewBox="0 0 16.6 12" ><path d="M0.9 6V11.1H15.7V6" fill="none" stroke="#222" stroke-width="1.8"/><path d="M8.3 0V7.4M4.6 3.7H12" stroke="#222" stroke-width="1.9"/></svg>
<svg class="i" style="left:213.4px;top:541px" width="16" height="16.2" viewBox="0 0 16 16.2" ><circle cx="8" cy="2.5" r="1.8" fill="none" stroke="#222" stroke-width="1.5"/><path d="M8 4.4V15M4.8 7H11.2" stroke="#222" stroke-width="1.6"/><path d="M1.2 9.4C1.6 12.8 4.4 15 8 15C11.6 15 14.4 12.8 14.8 9.4" fill="none" stroke="#222" stroke-width="1.7"/><path d="M0 11.2L1.2 8L3.6 10.6ZM16 11.2L14.8 8L12.4 10.6Z" fill="#222"/></svg>
<svg class="i" style="left:247px;top:541px" width="16.4" height="16.4" viewBox="0 0 16.4 16.4" ><g fill="none" stroke="#333" stroke-width="1.6" transform="rotate(-45 8.2 8.2)"><rect x="-0.6" y="5.6" width="8.4" height="5.2" rx="2.6"/><rect x="8.6" y="5.6" width="8.4" height="5.2" rx="2.6"/></g><rect x="5.2" y="5.2" width="6" height="6" transform="rotate(45 8.2 8.2)" fill="#f9f9f9"/><path d="M2.6 4.6L0.6 3.6M4.6 2.6L3.6 0.6M13.8 11.8L15.8 12.8M11.8 13.8L12.8 15.8" stroke="#333" stroke-width="1"/></svg>
<svg class="i" style="left:281.4px;top:540.8px" width="16.4" height="16.4" viewBox="0 0 16.4 16.4" ><g fill="none" stroke="#333" stroke-width="1.6" transform="rotate(-45 8.2 8.2)"><rect x="-1.2" y="5.5" width="10.4" height="5.4" rx="2.7"/><rect x="7.2" y="5.5" width="10.4" height="5.4" rx="2.7"/></g></svg>
<svg class="i" style="left:309.5px;top:548.0px" width="7" height="5.4" viewBox="0 0 7 5.4" ><path fill="#444" d="M0 0H7L3.5 5.4Z"/></svg>
<svg class="i" style="left:330.8px;top:541.9px" width="16" height="14" viewBox="0 0 16 14" ><rect x="0.7" y="0.7" width="14.6" height="12.6" rx="0.8" fill="#fff" stroke="#2a2030" stroke-width="1.4"/><path d="M2.2 11.6L6.2 6.2L8.6 8.8L11.4 5L13.8 8V11.6Z" fill="#222"/></svg>
<svg class="i" style="left:365.4px;top:541px" width="15.6" height="15.8" viewBox="0 0 15.6 15.8" ><text x="0" y="6.9" style="font-family:&quot;Liberation Mono&quot;;font-size:8.6px;font-weight:700;letter-spacing:-0.1px" fill="#3a2340" textLength="15.4" lengthAdjust="spacingAndGlyphs">ABC</text><path d="M3.4 11.4L6.4 14.2L11.8 9" fill="none" stroke="#222" stroke-width="2"/></svg>
<svg class="i" style="left:399px;top:541px" width="16.6" height="16" viewBox="0 0 16.6 16" ><path d="M2.4 0V5.4H14.2V0M2.4 16V10.6H14.2V16" fill="none" stroke="#3a2340" stroke-width="1.3"/><path d="M0 8H16.6" stroke="#3a2340" stroke-width="1.2" stroke-dasharray="2.4 1"/></svg>
<svg class="i" style="left:432.4px;top:541px" width="17.2" height="16" viewBox="0 0 17.2 16" ><rect x="5" y="0.7" width="11.4" height="14.6" fill="none" stroke="#3a2340" stroke-width="1.4"/><path d="M4.6 7.6H17" stroke="#3a2340" stroke-width="1.3" stroke-dasharray="2.2 1.1"/><path d="M0 4.8L3.4 7.6L0 10.4Z" fill="#222"/></svg>
</div>
</body></html>
